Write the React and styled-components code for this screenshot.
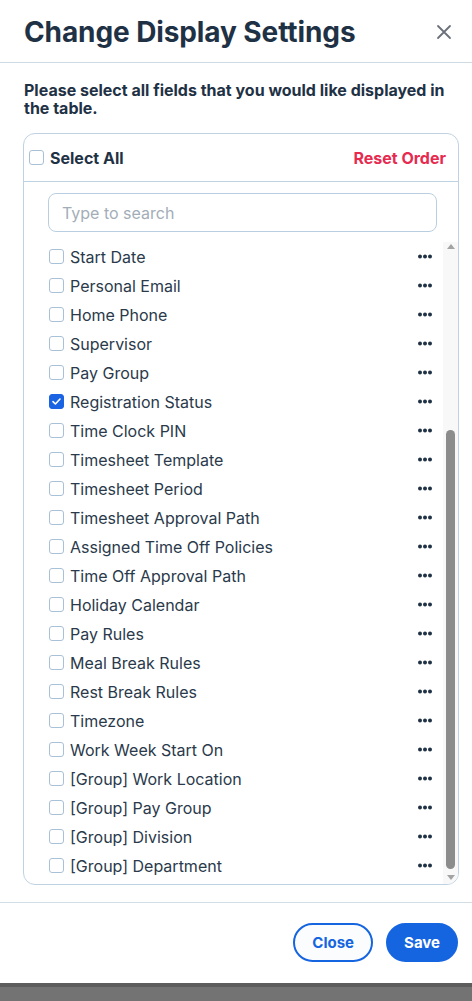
import React, { useLayoutEffect, useRef } from "react";
import styled, { createGlobalStyle } from "styled-components";

const Global = createGlobalStyle`
  html, body { margin: 0; padding: 0; }
  body {
    background: #737373;
    font-family: Inter, "Noto Sans", sans-serif;
    -webkit-font-smoothing: antialiased;
  }
  * { box-sizing: border-box; }
`;

const Page = styled.div`
  width: 472px;
  height: 1001px;
  display: flex;
  flex-direction: column;
  background: #737373;
`;

const Modal = styled.div`
  height: 987px;
  background: #fff;
  display: flex;
  flex-direction: column;
  border-bottom: 4px solid #5d5d5d;
`;

const Header = styled.div`
  height: 63px;
  flex-shrink: 0;
  display: flex;
  align-items: center;
  justify-content: space-between;
  padding: 0 20px 0 24px;
  border-bottom: 1px solid #cfdbe4;
`;

const Title = styled.h1`
  margin: 0;
  font-size: 28px;
  font-weight: 700;
  color: #1f3245;
  letter-spacing: -0.1px;
  padding-top: 2px;
`;

const CloseX = styled.button`
  border: 0;
  background: none;
  padding: 0;
  width: 16px;
  height: 16px;
  display: flex;
  color: #6b717a;
  margin-top: 2px;
`;

const Body = styled.div`
  padding: 18px 13px 0 23px;
  display: flex;
  flex-direction: column;
`;

const Description = styled.p`
  margin: 0 0 16px 1px;
  font-size: 16px;
  line-height: 18px;
  font-weight: 700;
  color: #1f3245;
`;

const Card = styled.div`
  border: 1px solid #bfd2e2;
  border-radius: 12px;
  height: 752px;
  display: flex;
  flex-direction: column;
  overflow: hidden;
`;

const CardTop = styled.div`
  height: 48px;
  flex-shrink: 0;
  display: flex;
  align-items: center;
  justify-content: space-between;
  padding: 0 12px 0 5px;
  border-bottom: 1px solid #bfd2e2;
`;

const CheckLabel = styled.label`
  display: flex;
  align-items: center;
  gap: 6px;
  font-size: 16px;
  font-weight: ${(p) => (p.$strong ? 700 : 400)};
  color: ${(p) => (p.$strong ? "#1f3245" : "#2a3a4b")};
`;

const Box = styled.span`
  width: 15px;
  height: 15px;
  border-radius: 3px;
  border: 1px solid ${(p) => (p.$checked ? "#1a63e2" : "#a9c1d7")};
  background: ${(p) => (p.$checked ? "#1a63e2" : "#fff")};
  display: flex;
  align-items: center;
  justify-content: center;
  flex-shrink: 0;
`;

const ResetButton = styled.button`
  border: 0;
  background: none;
  padding: 0;
  font-family: inherit;
  font-size: 16px;
  font-weight: 700;
  color: #e62a50;
`;

const SearchWrap = styled.div`
  flex-shrink: 0;
  padding: 11px 21px 10px 24px;
`;

const Search = styled.input`
  display: block;
  width: 100%;
  height: 39px;
  border: 1px solid #b9cfe1;
  border-radius: 8px;
  padding: 0 13px;
  font-family: inherit;
  font-size: 16px;
  color: #2a3a4b;
  outline: none;
  &::placeholder { color: #a3adb8; }
`;

const ListArea = styled.div`
  flex: 1;
  display: flex;
  min-height: 0;
`;

const List = styled.div`
  flex: 1;
  overflow-y: scroll;
  padding-bottom: 4px;
  scrollbar-width: none;
  &::-webkit-scrollbar { display: none; }
`;

const Row = styled.div`
  height: 29px;
  display: flex;
  align-items: center;
  justify-content: space-between;
  padding: 0 11px 0 25px;
`;

const Track = styled.div`
  width: 15px;
  background: #f8f8f8;
  display: flex;
  flex-direction: column;
  align-items: center;
  padding: 2px 0 4px;
`;

const Arrow = styled.span`
  width: 0;
  height: 0;
  border-left: 4px solid transparent;
  border-right: 4px solid transparent;
  ${(p) =>
    p.$down
      ? "border-top: 5px solid #a3a3a3; margin-top: 6px;"
      : "border-bottom: 5px solid #a3a3a3; margin-bottom: 6px;"}
`;

const Rail = styled.div`
  flex: 1;
  width: 9px;
  display: flex;
  flex-direction: column;
  justify-content: flex-end;
`;

const Thumb = styled.div`
  width: 9px;
  border-radius: 5px;
  background: #8c8c8c;
`;

const Footer = styled.div`
  margin-top: 17px;
  border-top: 1px solid #d3dde5;
  padding: 20px 14px 0 0;
  display: flex;
  justify-content: flex-end;
  gap: 13px;
`;

const Button = styled.button`
  height: 39px;
  padding: 0 ${(p) => (p.$primary ? "16px" : "17px")};
  border-radius: 20px;
  border: 2px solid #1565e0;
  background: ${(p) => (p.$primary ? "#1565e0" : "#fbfcfe")};
  color: ${(p) => (p.$primary ? "#fff" : "#1565e0")};
  font-family: inherit;
  font-size: 15px;
  font-weight: 700;
`;

const fields = [
  "First Name",
  "Last Name",
  "Employee ID",
  "Job Title",
  "Work Email",
  "Mobile Phone",
  "Department",
  "Location",
  "Employment Type",
  "Start Date",
  "Personal Email",
  "Home Phone",
  "Supervisor",
  "Pay Group",
  "Registration Status",
  "Time Clock PIN",
  "Timesheet Template",
  "Timesheet Period",
  "Timesheet Approval Path",
  "Assigned Time Off Policies",
  "Time Off Approval Path",
  "Holiday Calendar",
  "Pay Rules",
  "Meal Break Rules",
  "Rest Break Rules",
  "Timezone",
  "Work Week Start On",
  "[Group] Work Location",
  "[Group] Pay Group",
  "[Group] Division",
  "[Group] Department",
];

const selected = new Set(["Registration Status"]);

const Check = ({ checked }) => (
  <Box $checked={checked}>
    {checked && (
      <svg width="9" height="7" viewBox="0 0 9 7" fill="none">
        <path d="M1 3.6L3.4 6L8 1" stroke="#fff" strokeWidth="1.6" strokeLinecap="round" strokeLinejoin="round" />
      </svg>
    )}
  </Box>
);

const Dots = () => (
  <svg width="14" height="5" viewBox="0 0 14 5">
    <circle cx="2" cy="2.5" r="2" fill="#1f3245" />
    <circle cx="7" cy="2.5" r="2" fill="#1f3245" />
    <circle cx="12" cy="2.5" r="2" fill="#1f3245" />
  </svg>
);

export default function App() {
  const listRef = useRef(null);
  useLayoutEffect(() => {
    if (listRef.current) listRef.current.scrollTop = listRef.current.scrollHeight;
  }, []);

  return (
    <Page>
      <Global />
      <Modal>
        <Header>
          <Title>Change Display Settings</Title>
          <CloseX aria-label="close">
            <svg width="16" height="16" viewBox="0 0 16 16" fill="none">
              <path d="M2 2L14 14M14 2L2 14" stroke="currentColor" strokeWidth="1.8" strokeLinecap="round" />
            </svg>
          </CloseX>
        </Header>
        <Body>
          <Description>
            Please select all fields that you would like displayed in the table.
          </Description>
          <Card>
            <CardTop>
              <CheckLabel $strong>
                <Check checked={false} />
                Select All
              </CheckLabel>
              <ResetButton>Reset Order</ResetButton>
            </CardTop>
            <SearchWrap>
              <Search placeholder="Type to search" />
            </SearchWrap>
            <ListArea>
              <List ref={listRef}>
                {fields.map((name) => (
                  <Row key={name}>
                    <CheckLabel>
                      <Check checked={selected.has(name)} />
                      {name}
                    </CheckLabel>
                    <Dots />
                  </Row>
                ))}
              </List>
              <Track>
                <Arrow />
                <Rail>
                  <Thumb style={{ height: "71.5%" }} />
                </Rail>
                <Arrow $down />
              </Track>
            </ListArea>
          </Card>
        </Body>
        <Footer>
          <Button>Close</Button>
          <Button $primary>Save</Button>
        </Footer>
      </Modal>
    </Page>
  );
}
